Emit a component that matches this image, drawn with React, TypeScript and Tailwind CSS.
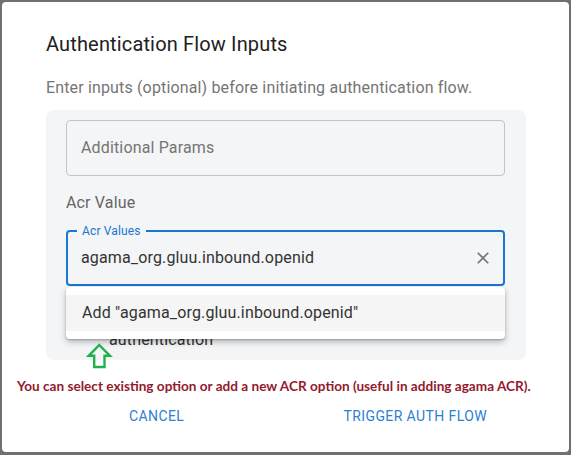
import React from 'react';

const ClearIcon = () => (
  <svg width="20" height="20" viewBox="0 0 24 24" fill="#757575">
    <path d="M19 6.41 17.59 5 12 10.59 6.41 5 5 6.41 10.59 12 5 17.59 6.41 19 12 13.41 17.59 19 19 17.59 13.41 12z" />
  </svg>
);

const UpArrow = () => (
  <svg width="28" height="30" viewBox="0 0 28 30" fill="none">
    <path d="M13.3 3 L24 13.8 L18.5 13.8 L18.5 25 L8.2 25 L8.2 13.8 L2.6 13.8 Z" stroke="#22b14c" strokeWidth="2.4" strokeLinejoin="miter" />
  </svg>
);

export default function App() {
  return (
    <div className="w-[571px] h-[455px] bg-[#707070] p-[2px] font-['Roboto',sans-serif] tracking-[0.15px]">
      <div className="relative w-[567px] h-[450px] bg-white rounded-[4px] flex flex-col">
        {/* Title */}
        <h2 className="pt-[26px] pl-[44px] text-[20px] leading-[32px] text-[#212121]">Authentication Flow Inputs</h2>
        <p className="mt-[16px] pl-[44px] text-[16px] leading-[24px] text-[#757575]">
          Enter inputs (optional) before initiating authentication flow.
        </p>

        {/* Form panel */}
        <div className="relative mt-[10px] ml-[44px] w-[480px] h-[250px] bg-[#f3f5f6] rounded-[8px] pt-[10px] px-[20px] flex flex-col">
          <div className="h-[56px] w-[439px] border border-[#c4c4c4] rounded-[4px] flex items-center pl-[14px] text-[16px] text-[#757575]">
            Additional Params
          </div>

          <div className="mt-[15px] text-[16px] leading-[24px] text-[#666]">Acr Value</div>

          <div className="relative mt-[15px] h-[56px] w-[439px] border-2 border-[#1976d2] rounded-[4px] flex items-center pl-[13px] pr-[10px]">
            <span className="absolute -top-[9px] left-[9px] px-[5px] bg-[#f3f5f6] text-[12px] leading-[16px] text-[#1976d2]">Acr Values</span>
            <span className="flex-1 text-[16px] text-[#333]">agama_org.gluu.inbound.openid</span>
            <ClearIcon />
            {/* Dropdown */}
            <div className="absolute left-[-2px] top-[55px] z-10 w-[439px] bg-white rounded-[4px] py-[8px] shadow-[0_3px_6px_rgba(0,0,0,0.25),0_1px_2px_rgba(0,0,0,0.2)]">
              <div className="h-[36px] bg-[#f5f5f5] flex items-center pl-[16px] text-[16px] text-[#333]">
                Add "agama_org.gluu.inbound.openid"
              </div>
            </div>
          </div>

          <div className="mt-[42px] pl-[43px] text-[16px] leading-[24px] text-[#333]">authentication</div>

          <div className="absolute left-[40px] top-[232px] z-20">
            <UpArrow />
          </div>
        </div>

        {/* Hint */}
        <p className="mt-[17px] pl-[15px] font-['Lato',sans-serif] font-bold text-[13.6px] leading-[18px] tracking-normal text-[#931a2e]">
          You can select existing option or add a new ACR option (useful in adding agama ACR).
        </p>

        {/* Actions */}
        <div className="mt-[9px] flex items-center text-[14px] leading-[24px] tracking-[0.4px] text-[#2f80d1]">
          <button className="ml-[127px] uppercase">Cancel</button>
          <button className="ml-auto mr-[82px] uppercase">Trigger Auth Flow</button>
        </div>
      </div>
    </div>
  );
}
